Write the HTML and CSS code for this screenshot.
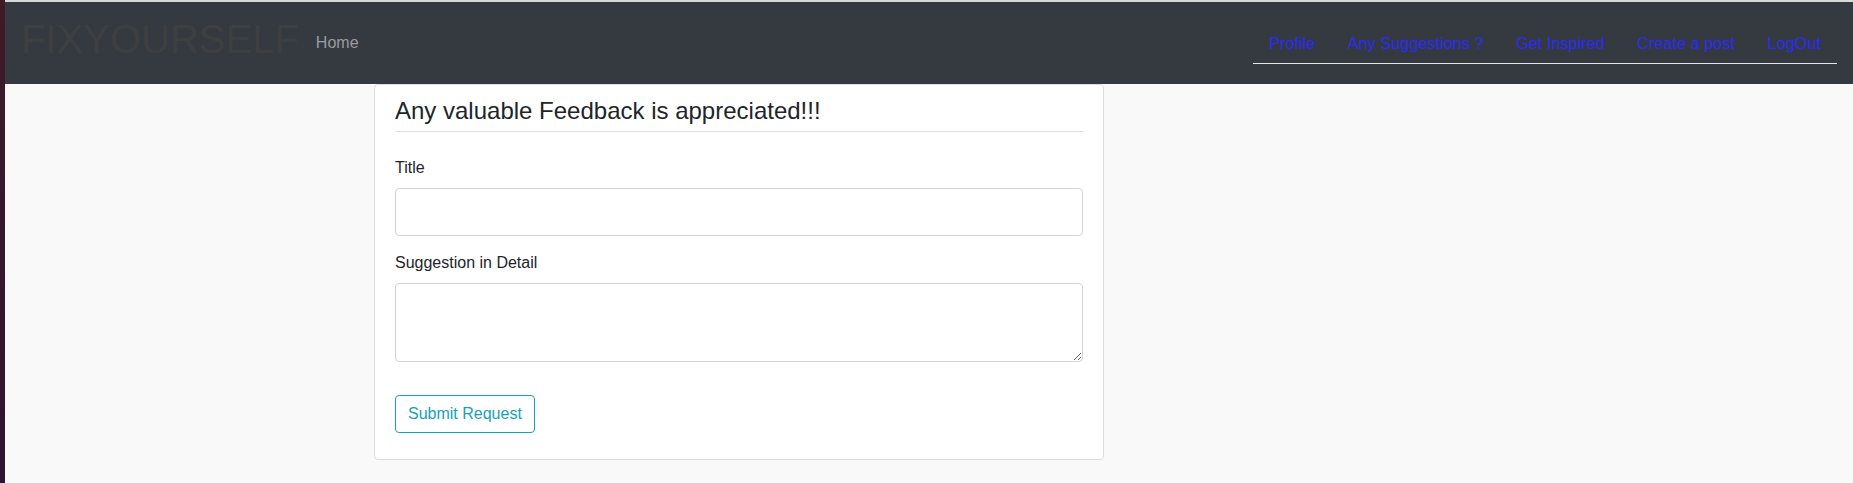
FILE: index.html
```html
<!DOCTYPE html>
<html lang="en">
<head>
<meta charset="utf-8">
<title>FIXYOURSELF</title>
<link rel="stylesheet" href="styles.css">
</head>
<body>
<div class="desktop">
  <div class="edge"></div>
  <div class="window">
    <nav class="navbar">
      <a class="brand" href="#">FIXYOURSELF</a>
      <a class="home" href="#">Home</a>
      <ul class="nav-right">
        <li><a href="#">Profile</a></li>
        <li><a href="#">Any Suggestions ?</a></li>
        <li><a href="#">Get Inspired</a></li>
        <li><a href="#">Create a post</a></li>
        <li><a href="#">LogOut</a></li>
      </ul>
    </nav>
    <main class="container">
      <div class="col">
        <div class="card">
          <h4 class="card-title">Any valuable Feedback is appreciated!!!</h4>
          <form class="form">
            <div class="form-group">
              <label for="title">Title</label>
              <input id="title" class="form-control" type="text">
            </div>
            <div class="form-group">
              <label for="detail">Suggestion in Detail</label>
              <textarea id="detail" class="form-control textarea"></textarea>
            </div>
            <button type="button" class="btn-info">Submit Request</button>
          </form>
        </div>
      </div>
    </main>
  </div>
</div>
</body>
</html>
```

FILE: styles.css
```css
* { box-sizing: border-box; }

html, body {
  margin: 0;
  padding: 0;
  height: 100%;
}

body {
  background: #f9f9f9;
  font-family: "Liberation Sans", Arial, sans-serif;
  font-size: 16px;
  line-height: 1.5;
  color: #212529;
}

.desktop {
  display: flex;
  min-height: 100vh;
}

.edge {
  width: 5px;
  flex: none;
  background: linear-gradient(#3f1a27, #2d1630);
}

.window {
  flex: 1;
  min-width: 0;
  border-top: 2px solid #d9d9d9;
  background: #f9f9f9;
}

.navbar {
  height: 82px;
  background: #343a40;
  display: flex;
  align-items: center;
  padding: 0 16px;
}

.brand {
  font-size: 40px;
  line-height: 1;
  color: #3e3f40;
  text-decoration: none;
  margin-bottom: 8px;
}

.home {
  margin-left: 17px;
  color: #9a9da0;
  text-decoration: none;
  font-size: 16px;
  line-height: 24px;
}

.nav-right {
  margin: 0 0 0 auto;
  padding: 0;
  list-style: none;
  display: flex;
  border-bottom: 1px solid #e6e6e6;
}

.nav-right a {
  display: block;
  padding: 8px 16px 8px 16.5px;
  color: #2a2af8;
  text-decoration: none;
  font-size: 16.3px;
  line-height: 24px;
}

.container {
  max-width: 1140px;
  margin: 0 auto;
  padding: 0;
}

.col {
  width: 66.6667%;
  padding: 0 15px;
}

.card {
  background: #fff;
  border: 1px solid #dcdcdc;
  border-radius: 4px;
  padding: 12px 20px 26px;
}

.card-title {
  margin: 0;
  font-size: 24px;
  font-weight: 400;
  line-height: 1.2;
  padding-bottom: 5px;
  border-bottom: 1px solid #dee2e6;
  color: #212529;
}

.form {
  padding-top: 24px;
}

.form-group {
  margin-bottom: 15px;
}

.form-group label {
  display: block;
  margin-bottom: 8px;
  line-height: 24px;
}

.form-control {
  display: block;
  width: 100%;
  height: 48px;
  border: 1px solid #ced4da;
  border-radius: 4px;
  background: #fff;
  font: inherit;
  padding: 6px 12px;
}

.textarea {
  height: 79px;
  resize: vertical;
}

.btn-info {
  margin-top: 18px;
  font: inherit;
  line-height: 24px;
  color: #17a2b8;
  background: #fff;
  border: 1px solid #17a2b8;
  border-radius: 4px;
  padding: 6px 12px;
}
```
